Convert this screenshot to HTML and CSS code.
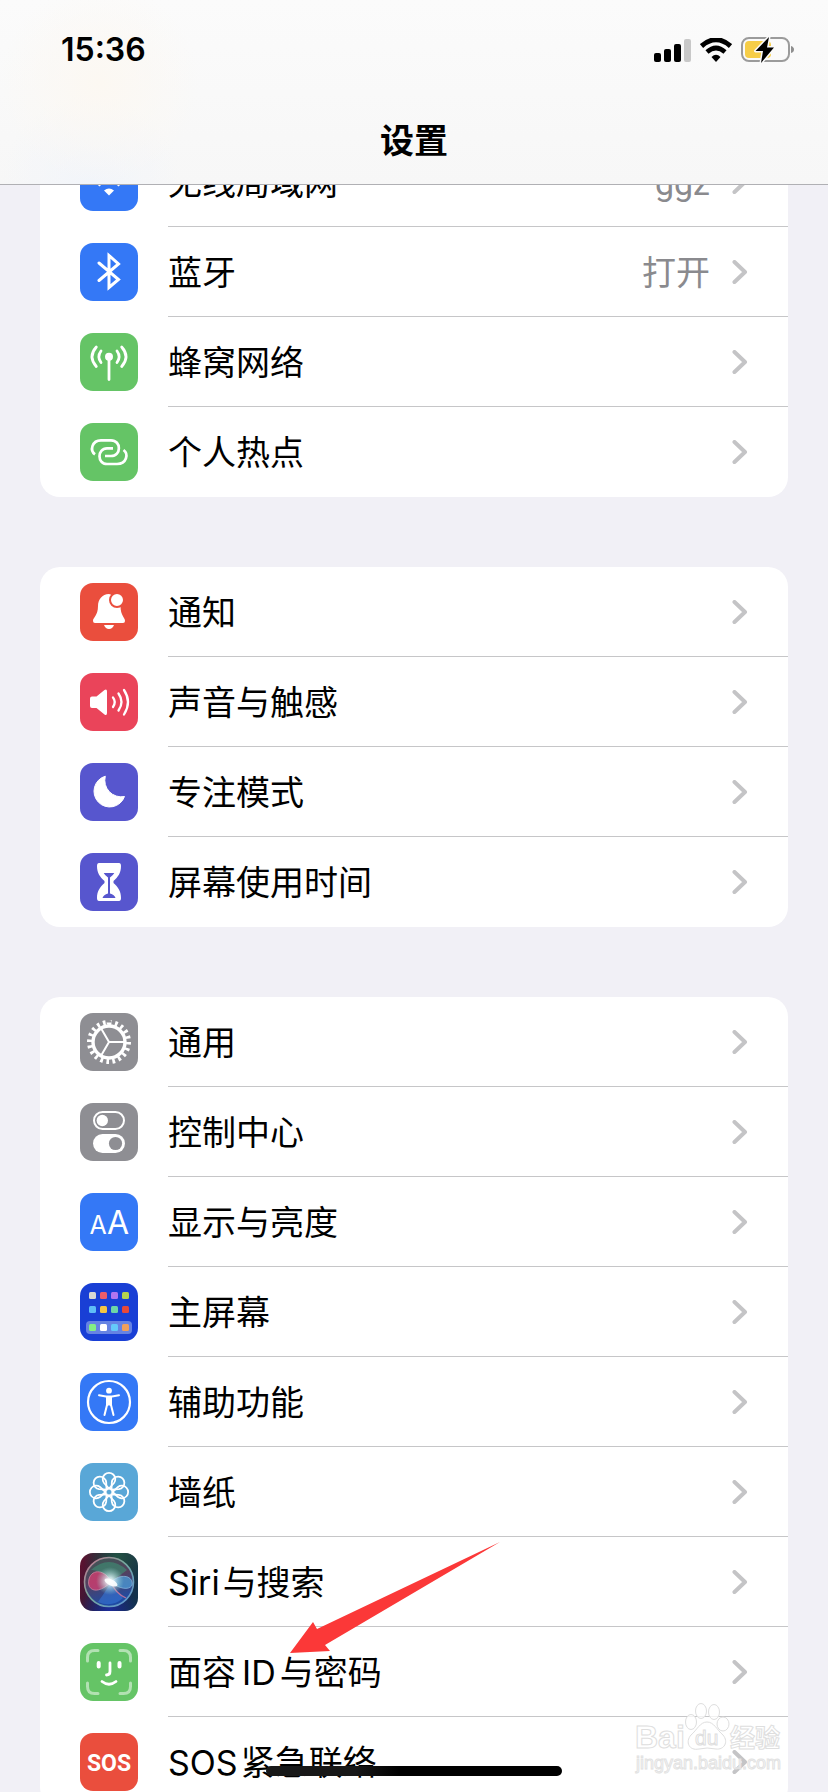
FILE: index.html
```html
<!DOCTYPE html>
<html lang="zh-CN">
<head>
<meta charset="utf-8">
<meta name="viewport" content="width=device-width, initial-scale=1">
<title>设置</title>
<link rel="stylesheet" href="styles.css">
</head>
<body>
<svg class="defs" aria-hidden="true">
  <symbol id="chevron" viewBox="0 0 16 24"><path d="M2.500 2L13 12L2.500 22" fill="none" stroke="#c4c4c6" stroke-width="4" stroke-linecap="round" stroke-linejoin="round"/></symbol>
</svg>
<div class="screen">
  <header class="top">
    <div class="status">
      <time class="clock">15:36</time>
      <div class="indicators">
        <svg class="signal" viewBox="0 0 37 24" aria-label="信号"><rect y="15" width="7" height="9" rx="2"/><rect x="10" y="11" width="7" height="13" rx="2"/><rect x="20" y="6" width="7" height="18" rx="2"/><rect x="30" y="1" width="7" height="23" rx="2" fill="#c8c8c8"/></svg>
        <svg class="wifi" viewBox="0 0 32 24" aria-label="Wi-Fi"><path d="M1.500 8Q16-4.500 30.500 8" fill="none" stroke="#000" stroke-width="5"/><path d="M7 14Q16 6 25 14" fill="none" stroke="#000" stroke-width="4.600"/><path d="M11.500 19Q16 14.500 20.500 19L16 24Z"/></svg>
        <svg class="battery" viewBox="0 0 54 28" aria-label="正在充电"><rect x="1" y="2" width="47" height="23" rx="7" fill="none" stroke="#9b9b9b" stroke-width="2"/><rect x="4" y="5" width="26" height="17" rx="4" fill="#f6cd47"/><path d="M50 10Q53 11 53 13.500T50 17Z" fill="#8f8f8f"/><path d="M28 1L14.500 15H22L20 27L33 11.500H26Z" stroke="#fafafa" stroke-width="3" paint-order="stroke" stroke-linejoin="round"/></svg>
      </div>
    </div>
    <h1 class="title">设置</h1>
  </header>

  <main class="list">
    <ul class="group">
      <li class="row"><a class="link" href="#wlan">
        <svg class="icon" viewBox="0 0 58 58"><rect width="58" height="58" rx="13" fill="#3478f6"/><g fill="none" stroke="#fff" stroke-width="4"><path d="M12 25Q29 9 46 25M18 32Q29 22 40 32"/></g><path d="M24 37.500Q29 33.500 34 37.500L29 42.500Z" fill="#fff"/></svg>
        <span class="body"><span class="label">无线局域网</span><span class="value">ggz</span><svg class="chevron"><use href="#chevron"/></svg></span></a></li>
      <li class="row"><a class="link" href="#bluetooth">
        <svg class="icon" viewBox="0 0 58 58"><rect width="58" height="58" rx="13" fill="#3478f6"/><path d="M19 20L38.500 36.500L29 44.500V12.500L38.500 21L19 37.500" fill="none" stroke="#fff" stroke-width="3" stroke-linecap="round"/></svg>
        <span class="body"><span class="label">蓝牙</span><span class="value">打开</span><svg class="chevron"><use href="#chevron"/></svg></span></a></li>
      <li class="row"><a class="link" href="#cellular">
        <svg class="icon" viewBox="0 0 58 58"><rect width="58" height="58" rx="13" fill="#65c466"/><circle cx="29" cy="23.700" r="4" fill="#fff"/><path d="M29 24V46.500M21 18Q16.800 23.700 21 29.500M16.300 14Q7.700 23.700 16.300 33.500M37 18Q41.200 23.700 37 29.500M41.700 14Q50.300 23.700 41.700 33.500" fill="none" stroke="#fff" stroke-width="2.800" stroke-linecap="round"/></svg>
        <span class="body"><span class="label">蜂窝网络</span><svg class="chevron"><use href="#chevron"/></svg></span></a></li>
      <li class="row"><a class="link" href="#hotspot">
        <svg class="icon" viewBox="0 0 58 58"><rect width="58" height="58" rx="13" fill="#65c466"/><path d="M15 31.300C9.500 27.500 12 17.300 21 17.300H31C41.500 17.300 41.500 33 31 33H25M33 25.300H27C17 25.300 17 41 27 41H37C46.500 41 49 31 43.500 27" fill="none" stroke="#fff" stroke-width="2.700"/></svg>
        <span class="body"><span class="label">个人热点</span><svg class="chevron"><use href="#chevron"/></svg></span></a></li>
    </ul>

    <ul class="group">
      <li class="row"><a class="link" href="#notifications">
        <svg class="icon" viewBox="0 0 58 58"><rect width="58" height="58" rx="13" fill="#ea4e3d"/><path d="M29 11C22 11 18 17 18 23C18 33 13 34 13 38Q13 40 15 40H43Q45 40 45 38C45 34 40.500 33 40.500 23L38 14Z" fill="#fff"/><path d="M24 42H34Q32.500 46 29 46T24 42Z" fill="#fff"/><circle cx="37" cy="17" r="7" fill="#fff" stroke="#ea4e3d" stroke-width="2"/></svg>
        <span class="body"><span class="label">通知</span><svg class="chevron"><use href="#chevron"/></svg></span></a></li>
      <li class="row"><a class="link" href="#sounds">
        <svg class="icon" viewBox="0 0 58 58"><rect width="58" height="58" rx="13" fill="#ea445a"/><path d="M12 23.500H16.500L24.500 17Q27 15.500 27 18.500V40Q27 43 24.500 41.500L16.500 35H12Q10 35 10 33V25.500Q10 23.500 12 23.500Z" fill="#fff"/><path d="M33 24.500Q36.500 29 33 34M38.500 20.500Q44.500 29 38.500 37.500M44 17Q52 29 44 41.500" fill="none" stroke="#fff" stroke-width="2.300" stroke-linecap="round"/></svg>
        <span class="body"><span class="label">声音与触感</span><svg class="chevron"><use href="#chevron"/></svg></span></a></li>
      <li class="row"><a class="link" href="#focus">
        <svg class="icon" viewBox="0 0 58 58"><rect width="58" height="58" rx="13" fill="#5756ce"/><path d="M25.300 13.200A15.700 15.700 0 1 0 44.500 33.500A16.500 16.500 0 0 1 25.300 13.200Z" fill="#fff" stroke="#fff" stroke-linejoin="round"/></svg>
        <span class="body"><span class="label">专注模式</span><svg class="chevron"><use href="#chevron"/></svg></span></a></li>
      <li class="row"><a class="link" href="#screen-time">
        <svg class="icon" viewBox="0 0 58 58"><rect width="58" height="58" rx="13" fill="#5756ce"/><path d="M19 10H39Q41 10 41 13C41 20 38 24 33.500 28V30C38 34 41 38 41 45Q41 48 39 48H19Q17 48 17 45C17 38 20 34 24.500 30V28C20 24 17 20 17 13Q17 10 19 10Z" fill="#fff"/><path d="M23.700 20H34.300Q33 22.500 30 24.500V40.500Q34.500 41.500 35.500 45H22.500Q23.500 41.500 28 40.500V24.500Q25 22.500 23.700 20Z" fill="#5756ce"/></svg>
        <span class="body"><span class="label">屏幕使用时间</span><svg class="chevron"><use href="#chevron"/></svg></span></a></li>
    </ul>

    <ul class="group">
      <li class="row"><a class="link" href="#general">
        <svg class="icon" viewBox="0 0 58 58"><rect width="58" height="58" rx="13" fill="#8e8e93"/><g fill="none" stroke="#fff"><circle cx="29" cy="29" r="19.500" stroke-width="5" pathLength="60" stroke-dasharray="1.300 1.700"/><circle cx="29" cy="29" r="16" stroke-width="3.400"/><path d="M29 29H44M29 29L21.300 15.800M29 29L21.300 42.200" stroke-width="2"/></g></svg>
        <span class="body"><span class="label">通用</span><svg class="chevron"><use href="#chevron"/></svg></span></a></li>
      <li class="row"><a class="link" href="#control-center">
        <svg class="icon" viewBox="0 0 58 58"><rect width="58" height="58" rx="13" fill="#8e8e93"/><rect x="14" y="9" width="30" height="17" rx="8.500" fill="none" stroke="#fff" stroke-width="2"/><circle cx="22.300" cy="17.500" r="5.700" fill="#fff"/><rect x="13" y="31" width="32" height="19" rx="9.500" fill="#fff"/><circle cx="35.500" cy="40.500" r="6.600" fill="#8e8e93"/></svg>
        <span class="body"><span class="label">控制中心</span><svg class="chevron"><use href="#chevron"/></svg></span></a></li>
      <li class="row"><a class="link" href="#display">
        <svg class="icon" viewBox="0 0 58 58"><rect width="58" height="58" rx="13" fill="#3478f6"/><text class="glyph" x="18" y="41" font-size="25">A</text><text class="glyph" x="38" y="41" font-size="32">A</text></svg>
        <span class="body"><span class="label">显示与亮度</span><svg class="chevron"><use href="#chevron"/></svg></span></a></li>
      <li class="row"><a class="link" href="#home-screen">
        <svg class="icon" viewBox="0 0 58 58"><rect width="58" height="58" rx="13" fill="#193fd5"/><rect x="6" y="38" width="46" height="13" rx="4" fill="#6683e3"/><g><rect x="9" y="9" width="7" height="7" rx="1.500" fill="#d9d9d3"/><rect x="20" y="9" width="7" height="7" rx="1.500" fill="#ec5d6a"/><rect x="31" y="9" width="7" height="7" rx="1.500" fill="#b375f0"/><rect x="42" y="9" width="7" height="7" rx="1.500" fill="#b5d350"/><rect x="9" y="23" width="7" height="7" rx="1.500" fill="#5fbdf7"/><rect x="20" y="23" width="7" height="7" rx="1.500" fill="#f5c543"/><rect x="31" y="23" width="7" height="7" rx="1.500" fill="#6dd5a6"/><rect x="42" y="23" width="7" height="7" rx="1.500" fill="#e8493b"/><rect x="9" y="41" width="7" height="7" rx="1.500" fill="#84ef84"/><rect x="20" y="41" width="7" height="7" rx="1.500" fill="#fff"/><rect x="31" y="41" width="7" height="7" rx="1.500" fill="#64c9fa"/><rect x="42" y="41" width="7" height="7" rx="1.500" fill="#f1a05b"/></g></svg>
        <span class="body"><span class="label">主屏幕</span><svg class="chevron"><use href="#chevron"/></svg></span></a></li>
      <li class="row"><a class="link" href="#accessibility">
        <svg class="icon" viewBox="0 0 58 58"><rect width="58" height="58" rx="13" fill="#3478f6"/><circle cx="29" cy="29" r="21" fill="none" stroke="#fff" stroke-width="2.200"/><circle cx="29" cy="17.700" r="2.900" fill="#fff"/><path d="M19 22.300L26 23.600H32L39 22.300M27 24V32L24.500 42M31 24V32L33.500 42" fill="none" stroke="#fff" stroke-width="2" stroke-linecap="round" stroke-linejoin="round"/><path d="M26 23H32V33H30L29 32L28 33H26Z" fill="#fff"/></svg>
        <span class="body"><span class="label">辅助功能</span><svg class="chevron"><use href="#chevron"/></svg></span></a></li>
      <li class="row"><a class="link" href="#wallpaper">
        <svg class="icon" viewBox="0 0 58 58"><defs><path id="petal" d="M29 25.500L24 20A6.300 6.300 0 1 1 34 20Z"/></defs><rect width="58" height="58" rx="13" fill="#59a7d7"/><g fill="none" stroke="#fff" stroke-width="1.800"><circle cx="29" cy="29" r="3.500"/><use href="#petal"/><use href="#petal" transform="rotate(45 29 29)"/><use href="#petal" transform="rotate(90 29 29)"/><use href="#petal" transform="rotate(135 29 29)"/><use href="#petal" transform="rotate(180 29 29)"/><use href="#petal" transform="rotate(225 29 29)"/><use href="#petal" transform="rotate(270 29 29)"/><use href="#petal" transform="rotate(315 29 29)"/></g></svg>
        <span class="body"><span class="label">墙纸</span><svg class="chevron"><use href="#chevron"/></svg></span></a></li>
      <li class="row"><a class="link" href="#siri">
        <svg class="icon" viewBox="0 0 58 58"><defs>
          <linearGradient id="siri-bg" x1="0" y1=".3" x2="1" y2=".6"><stop offset="0" stop-color="#5a1230"/><stop offset=".5" stop-color="#1c1f3a"/><stop offset="1" stop-color="#12314b"/></linearGradient>
          <radialGradient id="siri-green" cx=".65" cy=".05" r=".6"><stop offset="0" stop-color="#235244"/><stop offset="1" stop-color="#235244" stop-opacity="0"/></radialGradient>
          <radialGradient id="siri-blue" cx=".5" cy="1" r=".5"><stop offset="0" stop-color="#1d2c9a"/><stop offset="1" stop-color="#1d2c9a" stop-opacity="0"/></radialGradient>
          <linearGradient id="siri-ring" x1="0" y1="0" x2="1" y2="1"><stop offset="0" stop-color="#c9728f"/><stop offset=".45" stop-color="#76a99c"/><stop offset="1" stop-color="#5c93d8"/></linearGradient>
          <linearGradient id="siri-orb" x1="0" y1="0" x2=".3" y2="1"><stop offset="0" stop-color="#3c5a54"/><stop offset=".5" stop-color="#54405e"/><stop offset="1" stop-color="#1f4ba3"/></linearGradient>
          <radialGradient id="siri-glow"><stop offset="0" stop-color="#fff"/><stop offset=".25" stop-color="#eafcff" stop-opacity=".8"/><stop offset="1" stop-color="#8fd8d0" stop-opacity="0"/></radialGradient>
        </defs>
        <rect width="58" height="58" rx="13" fill="url(#siri-bg)"/><rect width="58" height="58" rx="13" fill="url(#siri-green)"/><rect width="58" height="58" rx="13" fill="url(#siri-blue)"/>
        <circle cx="29" cy="29" r="24.500" fill="url(#siri-orb)" stroke="url(#siri-ring)" stroke-width="1.600"/>
        <path d="M11 17Q29 1 47 17Q38 24 31 28Q20 16 11 17Z" fill="#3c9374" opacity=".6"/>
        <path d="M31 29C26 17 12 15 9 26S17 43 31 29Z" fill="#d83e72" opacity=".75" stroke="#f09ab4" stroke-width=".8"/>
        <path d="M31 29C38 22 50 21 52 29S41 38 31 29Z" fill="#4d9bd5" opacity=".75" stroke="#9fd4f5" stroke-width=".8"/>
        <path d="M31 29C24 41 20 46 18 49Q32 55 43 45Q36 38 31 29Z" fill="#3574d6" opacity=".6"/>
        <path d="M31 29Q35 40 46 45" fill="none" stroke="#d97b9c" stroke-width="1.300" opacity=".8"/>
        <circle cx="30" cy="28" r="14" fill="url(#siri-glow)"/><ellipse cx="31" cy="29.500" rx="7" ry="3" transform="rotate(25 31 29.500)" fill="#fff" opacity=".9"/></svg>
        <span class="body"><span class="label"><span class="latin-start">Siri</span>与搜索</span><svg class="chevron"><use href="#chevron"/></svg></span></a></li>
      <li class="row"><a class="link" href="#face-id">
        <svg class="icon" viewBox="0 0 58 58"><rect width="58" height="58" rx="13" fill="#65c466"/><path d="M7.500 18V14.500Q7.500 7.500 14.500 7.500H18M40 7.500H43.500Q50.500 7.500 50.500 14.500V18M50.500 40V43.500Q50.500 50.500 43.500 50.500H40M18 50.500H14.500Q7.500 50.500 7.500 43.500V40" fill="none" stroke="#b2e1b2" stroke-width="3" stroke-linecap="round"/><path d="M18.700 20V23.500M39.500 20V23.500" stroke="#fff" stroke-width="4" stroke-linecap="round"/><path d="M30 20V28.500Q30 32 26.500 32M22 38.500Q29 44 36 38.500" fill="none" stroke="#fff" stroke-width="2.800" stroke-linecap="round"/></svg>
        <span class="body"><span class="label">面容<span class="latin">ID</span>与密码</span><svg class="chevron"><use href="#chevron"/></svg></span></a>
        <svg class="arrow" viewBox="0 0 212 112" aria-hidden="true"><path d="M0 111L23 80L27 87L210 0L35 103L40 109Z" fill="#fb3838"/></svg></li>
      <li class="row"><a class="link" href="#sos">
        <svg class="icon" viewBox="0 0 58 58"><rect width="58" height="58" rx="13" fill="#ea4e3d"/><text class="sos" x="29" y="38">SOS</text></svg>
        <span class="body"><span class="label"><span class="latin-start">SOS</span>紧急联络</span><svg class="chevron"><use href="#chevron"/></svg></span></a></li>
    </ul>
  </main>

  <svg class="watermark" viewBox="0 0 150 80" aria-label="Baidu经验 jingyan.baidu.com">
    <g class="mark">
      <text x="1" y="46" font-size="32" font-weight="700">Bai</text>
      <ellipse cx="57" cy="20" rx="5.500" ry="7.500"/><ellipse cx="67" cy="9" rx="5.500" ry="7.500"/><ellipse cx="80" cy="10" rx="5.500" ry="7.500"/><ellipse cx="89" cy="22" rx="6" ry="7"/>
      <path d="M73 20C80 20 83 28 89 33C95 40 90 48 82 47Q73 45 65 47C55 49 51 40 57 33C63 28 66 20 73 20Z"/>
      <text x="61" y="43" font-size="21">du</text>
      <text x="96" y="45" font-size="25" font-weight="700">经验</text>
      <text class="url" x="2" y="67" font-size="18">jingyan.baidu.com</text>
    </g>
  </svg>
  <div class="home-bar"></div>
</div>
</body>
</html>
```
FILE: styles.css
```css
* {
  box-sizing: border-box;
}

body {
  margin: 0;
  background: #f1f0f6;
  color: #000;
  font-family: Inter, "Noto Sans CJK SC", sans-serif;
}

.defs {
  display: none;
}

.screen {
  position: relative;
  height: 100vh;
  overflow: hidden;
}

.top {
  position: relative;
  z-index: 2;
  padding-top: 30px;
  border-bottom: 1px solid #b0b0b4;
  background:
    radial-gradient(circle at 12% 45%, #fcf8f2 0, transparent 100px),
    radial-gradient(circle at 11% 100%, #f2f5fa 0, transparent 90px),
    linear-gradient(#fbfbfb, #f7f7f7);
}

.status {
  display: flex;
  align-items: center;
  justify-content: space-between;
  height: 40px;
  padding: 0 33px 0 61px;
}

.clock {
  font-size: 32px;
  font-weight: 600;
  line-height: 40px;
}

.indicators {
  display: flex;
  align-items: center;
  gap: 9px;
}

.signal {
  width: 37px;
  height: 24px;
}

.wifi {
  width: 32px;
  height: 24px;
}

.battery {
  width: 54px;
  height: 28px;
}

.title {
  margin: 47px 0 19px;
  font-size: 34px;
  font-weight: 700;
  line-height: 48px;
  text-align: center;
}

.list {
  display: flex;
  flex-direction: column;
  gap: 70px;
  margin-top: -48px;
  padding: 0 40px;
}

.group {
  margin: 0;
  padding: 0;
  border-radius: 20px;
  background: #fff;
  list-style: none;
}

.row {
  position: relative;
}

.link {
  display: flex;
  align-items: center;
  gap: 30px;
  padding-left: 40px;
  color: inherit;
  text-decoration: none;
}

.icon {
  flex: none;
  width: 58px;
  height: 58px;
}

.body {
  display: flex;
  flex: 1;
  align-items: center;
  height: 90px;
  padding-right: 40px;
  border-bottom: 1px solid #c6c6c8;
}

.row:last-child .body {
  border-bottom-color: transparent;
}

.label {
  flex: 1;
  padding-top: 2px;
  font-size: 34px;
  line-height: 48px;
}

.latin {
  margin: 0 4px 0 6px;
}

.latin-start {
  margin-right: 3px;
}

.value {
  margin-right: 22px;
  padding-top: 2px;
  color: #8a8a8e;
  font-family: Roboto, "Noto Sans CJK SC", sans-serif;
  font-size: 34px;
  line-height: 48px;
}

.chevron {
  flex: none;
  width: 16px;
  height: 24px;
}

.glyph {
  fill: #fff;
  font-weight: 400;
  text-anchor: middle;
}

.sos {
  fill: #fff;
  font-family: Roboto, sans-serif;
  font-size: 23px;
  font-weight: 700;
  text-anchor: middle;
}

.arrow {
  position: absolute;
  top: -85px;
  left: 250px;
  z-index: 1;
  width: 212px;
  height: 112px;
}

.watermark {
  position: absolute;
  right: 44px;
  bottom: 10px;
  width: 150px;
  height: 80px;
}

.mark {
  fill: rgba(255, 255, 255, 0.75);
  stroke: #dedede;
  stroke-width: 1;
  font-family: "Liberation Sans", "Noto Sans CJK SC", sans-serif;
}

.url {
  stroke: #e2e2e2;
}

.home-bar {
  position: absolute;
  bottom: 16px;
  left: 50%;
  width: 296px;
  height: 10px;
  margin-left: -148px;
  border-radius: 5px;
  background: linear-gradient(90deg, #181818 30%, #000 45%);
}
```
